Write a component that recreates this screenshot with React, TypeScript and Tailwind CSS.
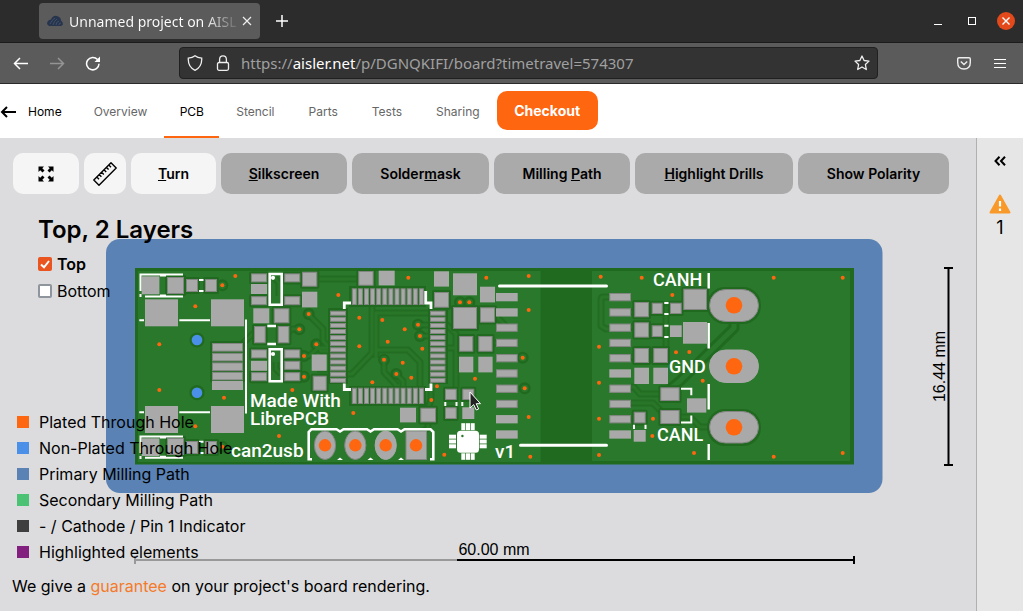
import type { ReactNode } from "react";

type Pad = [number, number, number, number];
type Point = [number, number];

const isolatedPads: Pad[] = [
  [167, 277, 17, 17], [186, 279, 12, 13], [205, 279, 12, 13],
  [167, 438, 17, 17], [186, 441, 12, 13], [205, 441, 12, 13],
  [212, 343, 31, 8.6], [212, 352.8, 31, 8.6], [212, 362.4, 31, 8.6], [212, 371.8, 31, 8.6],
  [251, 273.4, 16, 9], [251, 296.2, 16, 9], [284.3, 273.4, 16, 9], [284.3, 296.2, 16, 9],
  [302, 271.7, 15.3, 15], [273.7, 308.3, 15.7, 15], [254, 326, 11.7, 17.3], [277.7, 326, 11.7, 17.3],
  [251, 349.4, 16, 9], [251, 372.2, 16, 9], [284.3, 349.4, 16, 9], [284.3, 360.8, 16, 9], [284.3, 372.2, 16, 9],
  [312.7, 375.7, 14, 15], [358.3, 271, 15.3, 14.7], [434, 292, 15, 15.7], [453, 307, 24, 22],
  [480, 307.3, 15, 15.3], [459, 336, 14.3, 15.7], [478.3, 336, 14.3, 15.7],
  [420.3, 407.7, 15.7, 14.7], [445, 388.7, 11.7, 11.3], [462.3, 388.7, 12, 11.3], [445, 407.3, 11.7, 11.7],
  [634.3, 302, 14.7, 15.3], [651.7, 302.7, 11, 11.3], [670, 302.7, 11.7, 11.3], [683.3, 288.7, 23.7, 21.3],
  [634.3, 322.3, 14.7, 15.3], [651.7, 325.3, 11, 11.7], [634.3, 348, 14.7, 15], [653.3, 348, 14.7, 15],
  [660.3, 387.3, 19.3, 13.7], [660.3, 410, 19.3, 14], [633.7, 411.7, 12, 11.7],
];

const groundPads: Pad[] = [
  [141.7, 276.3, 17.7, 18], [141.7, 438.3, 17.7, 17.7], [145, 299.3, 33, 27], [211, 299.3, 33, 27],
  [145, 406, 33, 27], [211, 406, 33, 27], [212, 381, 31, 9], [251, 284, 16, 10], [302, 291.7, 15.3, 15.7],
  [253.3, 308.3, 16, 15], [251, 360.8, 16, 10], [311.7, 354.5, 15, 16.3], [378.7, 270.7, 16, 14.7],
  [434, 271.3, 15, 15.3], [453, 273.3, 24, 22], [480, 286.7, 15, 15.7], [459, 356.7, 14.3, 15.7],
  [478.3, 356.7, 14.3, 15.7], [400, 407.7, 16, 14.7], [462.3, 407.3, 12, 11.7], [670, 325.3, 11.7, 11.7],
  [683, 322, 24, 21.7], [634.3, 367.7, 14.7, 16.3], [653.3, 367.7, 14.7, 16.3], [687, 398.3, 19.3, 14.3],
  [633.7, 430, 12, 11.7],
];

const vias: Point[] = [
  [235.3, 276], [222.3, 285.3], [195.3, 306.3], [159.3, 344.3], [308.7, 314], [299.3, 329.3], [316.3, 344.3],
  [304, 356], [159.3, 390], [224, 397.7], [195.3, 426.3], [222.3, 446.7], [304, 376.7], [292.3, 390],
  [279, 436], [338.3, 295], [408.3, 277.7], [359.3, 317.7], [382.3, 320], [404.7, 329.3], [418, 324.7],
  [420, 336], [387.7, 341.7], [359.3, 346.3], [422.3, 348.7], [384, 359.7], [402.7, 362.7], [460, 302.3],
  [469.3, 302.3], [486.3, 277.7], [396.3, 374], [411.3, 377.7], [372.3, 382.3], [437, 386.3], [431.3, 400],
  [353.3, 413], [475, 378.7], [444.3, 454.7], [528.7, 276], [600.7, 276.7], [641.7, 277.7], [528.7, 310],
  [599, 346.7], [522.7, 357.7], [599, 382.7], [524.7, 388.3], [528.7, 417], [599, 418.7], [530.3, 456.7],
  [599, 455], [653, 418.7], [652.3, 436], [672.3, 295], [773.7, 277.7], [842.7, 277.7], [676, 352.3],
  [689.3, 352], [702.7, 380.7], [694, 453], [773.7, 456.7], [842.7, 453],
];

const ringedVias: Point[] = [
  [222.3, 285.3], [308.7, 314], [299.3, 329.3], [316.3, 344.3], [304, 356], [304, 376.7], [418, 324.7],
  [420, 336], [384, 359.7], [396.3, 374], [460, 302.3], [469.3, 302.3], [522.7, 357.7], [524.7, 388.3],
  [222.3, 446.7],
];

const traces = [
  "M317 279H358",
  "M308 314L323 329V341L330 348",
  "M316 344L321 351H331",
  "M304 356H309L318 348H330",
  "M299 329H292L284 337",
  "M243 343L256 331",
  "M317 374H352L372 353V285",
  "M376 358V313H430",
  "M418 325H430",
  "M420 336H430",
  "M376 350H408L420 362V386",
  "M384 360V372L397 386",
  "M396 374L403 381V388",
  "M445 323L456 334V388",
  "M445 348H459",
  "M431 388V400L428 408",
  "M428 422V428L416 436",
  "M495 315L507 327",
  "M492 343H507",
  "M609 297H603Q601 297 601 300V326L606 329H609",
  "M631 312H640",
  "M631 327H634",
  "M666 308V352",
  "M664 308H670",
  "M631 357H634",
  "M649 355H653",
  "M631 387H634L640 394H661",
  "M631 403H653L664 414",
  "M679 417H690L700 427H709",
  "M276 362V369L281 374",
  "M275 278L279 283V296",
];

const headerX = [325, 355.3, 385.7, 416];
const pinPitch = Array.from({ length: 12 }, (_, i) => i * 6.1);
const modulePitch = Array.from({ length: 10 }, (_, i) => i * 15.26);

function IsolatedPad({ pad: [x, y, w, h] }: { pad: Pad }) {
  return <rect x={x + 0.5} y={y + 0.5} width={w - 1} height={h - 1} fill="#a9a9a9" stroke="#838583" />;
}

function GroundPad({ pad: [x, y, w, h] }: { pad: Pad }) {
  return <rect x={x} y={y} width={w} height={h} fill="#a9a9a9" />;
}

function Board() {
  return (
    <svg viewBox="106 238 850 328" className="block h-auto w-[850px]" role="img" aria-label="Rendering of the top layer">
      <rect x="106" y="239" width="776.5" height="254" rx="14" fill="#5a82b4" />
      <rect x="135" y="268" width="719" height="196.5" fill="#206a20" />
      <path d="M138 271H540.5V462H138Z M592 271H850V461H592Z" fill="#2a782b" />

      <g fill="none" strokeLinejoin="round">
        {traces.map((d) => <path key={d} d={d} stroke="#226d22" strokeWidth="7" />)}
        {ringedVias.map(([x, y]) => <circle key={`${x}-${y}`} cx={x} cy={y} r="6" fill="#206a20" />)}
        <path d="M734 321V328L680 381L670 389" stroke="#206a20" strokeWidth="11" />
        {traces.map((d) => <path key={d} d={d} stroke="#297629" strokeWidth="3" />)}
        <path d="M734 321V328L680 381L670 389" stroke="#2a782b" strokeWidth="5" />
        {ringedVias.map(([x, y]) => <circle key={`${x}-${y}`} cx={x} cy={y} r="3.6" fill="#2a782b" />)}
      </g>

      <g fill="#206a20">
        {isolatedPads.map(([x, y, w, h]) => (
          <rect key={`${x}-${y}`} x={x - 2} y={y - 2} width={w + 4} height={h + 4} rx="2" />
        ))}
        <rect x="349" y="286" width="77" height="21" />
        <rect x="349" y="386" width="77" height="20" />
        <rect x="328" y="308" width="20" height="76" />
        <rect x="428" y="308" width="20" height="76" />
        <rect x="707" y="287" width="54" height="37" rx="18" />
        <rect x="707" y="409" width="54" height="37" rx="18" />
        <circle cx="197" cy="340" r="7.6" />
        <circle cx="197" cy="392.7" r="7.6" />
      </g>

      {isolatedPads.map((p) => <IsolatedPad key={p.join()} pad={p} />)}
      {groundPads.map((p) => <GroundPad key={p.join()} pad={p} />)}
      {pinPitch.map((o) => (
        <g key={o}>
          <IsolatedPad pad={[351.8 + o, 288.3, 5, 16.7]} />
          <IsolatedPad pad={[351.8 + o, 387.7, 5, 16.3]} />
          <IsolatedPad pad={[330, 310.7 + o, 16, 5]} />
          <IsolatedPad pad={[430, 310.7 + o, 15.5, 5]} />
        </g>
      ))}
      {modulePitch.map((o, i) => {
        const left: Pad = [496, 293 + o, 21.7, 8.3];
        const right: Pad = [609.3, 293 + o, 21.7, 8.3];
        return (
          <g key={o}>
            {i > 1 && i < 8 ? <IsolatedPad pad={left} /> : <GroundPad pad={left} />}
            {i !== 5 && i !== 9 ? <IsolatedPad pad={right} /> : <GroundPad pad={right} />}
          </g>
        );
      })}

      <g fill="#a9a9a9" stroke="#838583">
        {headerX.slice(0, 3).map((x, i) => (
          <ellipse key={x} cx={x} cy="445.3" rx="10.6" ry="14.2" stroke={i === 2 ? "#a9a9a9" : "#838583"} />
        ))}
        <rect x="406" y="431" width="20.5" height="28.5" />
        <rect x="709.5" y="289.5" width="49" height="32" rx="16" />
        <rect x="709.5" y="350" width="49" height="32.5" rx="16" stroke="#a9a9a9" />
        <rect x="709.5" y="411.5" width="49" height="31.5" rx="16" />
      </g>

      <g fill="#ff6610">
        {vias.map(([x, y]) => <circle key={`${x}-${y}`} cx={x} cy={y} r="2" />)}
        {headerX.map((x) => <circle key={x} cx={x} cy="445.3" r="6.2" />)}
        {[305.3, 366.3, 427.3].map((y) => <circle key={y} cx="734" cy={y} r="8.3" />)}
      </g>
      <circle cx="197" cy="340" r="5.3" fill="#4a90e8" />
      <circle cx="197" cy="392.7" r="5.3" fill="#4a90e8" />

      <g fill="none" stroke="#fff" strokeWidth="2">
        <path d="M183 274.5H140.5V291M140.5 294V297M145 296.5H183M160 275.5H166M160 295.5H166" />
        <path d="M183 436.5H140.5V453M140.5 456V459M145 457.8H183M160 437.5H166M160 456.8H166" />
        <path d="M199 280H203.5M199 291H203.5M199 441.7H203.5M199 453H203.5" />
        <path d="M139.3 320.2H144M179.3 320.2H210M139.3 412.3H144M179.3 412.3H210M246 319.5V413.5" />
        <path d="M269.7 274H281.7V304.7H269.7Z M269.7 349.3H281.7V381.3H269.7Z" strokeWidth="2.6" />
        <path d="M267.3 326H276M267.3 344H276" strokeWidth="2.6" />
        <path d="M344.3 309V303H351M425.7 291V303H431V309M344.3 383.5V389.5H351M425 389.5H431V383.5" strokeWidth="2.8" />
        <path d="M445.3 402V406M456.5 402V406M462.3 402V406M634 424.7V429M645.5 424.7V429" />
        <path d="M664.3 303H668.5M664.3 314H668.5M664.3 325.7H668.5M664.3 337H668.5" />
        <path d="M681 388.7H691.3V395.3M681 422.5H691.3V415.5" />
        <path d="M708.7 273V288.5M708.7 323V348.5M708.7 384V409.5M708.7 444V460" strokeWidth="2.4" />
        <path d="M499.5 286H606.5M520.5 445.3H606.5" strokeWidth="3" strokeLinecap="round" />
        <path
          d="M312 459.3H308.7V432L311.5 429.2H336.5L340 431.5L343.5 429.2H367L370.5 431.5L374 429.2H397.5L401 431.5L404.5 429.2H430.5L433.3 432V459.3H430"
          strokeWidth="2.6"
        />
      </g>
      <g fill="#fff">
        <circle cx="273" cy="277.8" r="2.1" />
        <circle cx="273" cy="354" r="2.1" />
        <path d="M337 460L340 457.5L343 460ZM367.5 460L370.5 457.5L373.5 460ZM398 460L401 457.5L404 460Z" />
        <rect x="457" y="430.7" width="22" height="22" rx="3.5" />
        {[434.7, 439.5, 444.3].map((y) => (
          <g key={y}>
            <rect x="449" y={y} width="7" height="4" />
            <rect x="479.7" y={y} width="7" height="4" />
          </g>
        ))}
        {[461.3, 466, 470.7].map((x) => (
          <g key={x}>
            <rect x={x} y="423.2" width="4" height="7" />
            <rect x={x} y="453.3" width="4" height="6.5" />
          </g>
        ))}
      </g>
      <circle cx="462.4" cy="436" r="1.2" fill="#2a782b" />

      <g fill="#fff" className="font-['Roboto',sans-serif] text-[19px] font-medium">
        <text x="250" y="407">Made With</text>
        <text x="250" y="425">LibrePCB</text>
        <text x="231" y="457">can2usb</text>
        <text x="495" y="458">v1</text>
      </g>
      <g fill="#fff" className="font-['Roboto',sans-serif] text-[18px] font-medium">
        <text x="653" y="286">CANH</text>
        <text x="669" y="373">GND</text>
        <text x="657" y="441">CANL</text>
      </g>

      <g fill="none" stroke="#000" strokeWidth="2">
        <path d="M948.5 268V465M944 268H953M944 465H953" />
        <path d="M457 560H854M854 556V564" />
        <path d="M457 560H135M135 556V564" stroke="#999" />
      </g>
      <g className="font-['Liberation_Sans',sans-serif] text-base" textAnchor="middle">
        <text x="494" y="555">60.00 mm</text>
        <text transform="translate(944.5 366.5) rotate(-90)">16.44 mm</text>
      </g>
      <path d="M470 392V408L473.7 404.6L476.3 410L478.6 409L476.2 403.7H480.5Z" fill="#222" stroke="#fff" strokeWidth="1" />
    </svg>
  );
}

function IconButton({ label, className = "", children }: { label: string; className?: string; children: ReactNode }) {
  return (
    <button type="button" aria-label={label} className={`flex items-center justify-center ${className}`}>
      {children}
    </button>
  );
}

function TitleBar() {
  return (
    <div className="flex h-[43px] items-center border-b border-[#1c1c1c] bg-[#2c2c2c] pl-[39px] pr-2 text-white">
      <div className="flex h-9 w-[221px] items-center rounded bg-[#5b5b5b] px-2">
        <svg viewBox="0 0 16 12" className="mr-1.5 h-3 w-4 shrink-0">
          <path d="M0 9Q0 5 4 4.5Q6 0 10 1Q14 2 14 5.5Q16 7 16 9.5L14 11H2Z" fill="#26344d" />
          <path d="M3 9Q5 5 8 3M6 10Q7 6 10 4M9 10Q9 7 12 6M12 10Q12 8 14 8" fill="none" stroke="#4e5b70" strokeWidth="0.7" />
        </svg>
        <span className="flex-1 whitespace-nowrap bg-linear-to-r from-white from-80% to-[#666] bg-clip-text text-[14px] text-transparent">
          Unnamed project on AISL
        </span>
        <IconButton label="Close tab" className="ml-1 shrink-0">
          <svg viewBox="0 0 10 10" className="size-2.5"><path d="M1 1L9 9M9 1L1 9" stroke="#eee" strokeWidth="1.2" /></svg>
        </IconButton>
      </div>
      <IconButton label="New tab" className="ml-4">
        <svg viewBox="0 0 12 12" className="size-3"><path d="M6 0V12M0 6H12" stroke="#fff" strokeWidth="1.5" /></svg>
      </IconButton>
      <div className="ml-auto flex items-center">
        <IconButton label="Minimize" className="mr-[26px]">
          <svg viewBox="0 0 8 8" className="size-2"><path d="M0 7.5H8" stroke="#fff" /></svg>
        </IconButton>
        <IconButton label="Maximize" className="mr-[21px]">
          <svg viewBox="0 0 8 8" className="size-2"><rect x="0.5" y="0.5" width="7" height="7" fill="none" stroke="#fff" /></svg>
        </IconButton>
        <IconButton label="Close window" className="size-[18px] rounded-full bg-[#e24a1b]">
          <svg viewBox="0 0 8 8" className="size-2"><path d="M0.5 0.5L7.5 7.5M7.5 0.5L0.5 7.5" stroke="#fff" strokeWidth="1.4" /></svg>
        </IconButton>
      </div>
    </div>
  );
}

function AddressBar() {
  return (
    <div className="flex h-[41px] items-center border-b border-[#2a2a2a] bg-[#5b5b5b] pl-[13px] pr-[17px]">
      <IconButton label="Back">
        <svg viewBox="0 0 16 16" className="size-4"><path d="M15 8.5H1.5M7 3L1.5 8.5L7 14" fill="none" stroke="#fff" strokeWidth="1.5" /></svg>
      </IconButton>
      <IconButton label="Forward" className="ml-5">
        <svg viewBox="0 0 16 16" className="size-4"><path d="M1 8.5H14.5M9 3L14.5 8.5L9 14" fill="none" stroke="#949494" strokeWidth="1.5" /></svg>
      </IconButton>
      <IconButton label="Reload" className="ml-5">
        <svg viewBox="0 0 16 16" className="size-4">
          <path d="M14 8.7A6.2 6.2 0 1 1 12.5 4.6" fill="none" stroke="#fff" strokeWidth="1.5" />
          <path d="M15 1.5V7H9.5Z" fill="#fff" />
        </svg>
      </IconButton>
      <div className="ml-[78px] flex h-8 w-[699px] items-center rounded border border-[#202020] bg-[#333] px-[7px]">
        <svg viewBox="0 0 16 16" className="size-4 shrink-0">
          <path d="M8 0.8Q10.5 2.8 14.7 3.2Q15.2 12 8 15.3Q0.8 12 1.3 3.2Q5.5 2.8 8 0.8Z" fill="none" stroke="#eee" strokeWidth="1.3" />
        </svg>
        <svg viewBox="0 0 14 16" className="ml-[13px] h-4 w-3.5 shrink-0">
          <rect x="1.5" y="7.5" width="11" height="7.8" rx="1.5" fill="none" stroke="#eee" strokeWidth="1.3" />
          <path d="M3.6 7.5V4.5Q3.6 0.8 7 0.8T10.4 4.5V7.5" fill="none" stroke="#eee" strokeWidth="1.3" />
        </svg>
        <div className="ml-[11px] flex-1 whitespace-nowrap text-[15px] text-[#a0a0a0]">
          https://<span className="text-white">aisler.net</span>/p/DGNQKIFI/board?timetravel=574307
        </div>
        <IconButton label="Bookmark">
          <svg viewBox="0 0 16 16" className="size-4">
            <path d="M8 1L10.1 5.5L15 6.1L11.4 9.5L12.3 14.5L8 12L3.7 14.5L4.6 9.5L1 6.1L5.9 5.5Z" fill="none" stroke="#eee" strokeWidth="1.3" strokeLinejoin="round" />
          </svg>
        </IconButton>
      </div>
      <IconButton label="Pocket" className="ml-auto">
        <svg viewBox="0 0 14 13" className="h-[13px] w-3.5">
          <path d="M2 0.7H12Q13.3 0.7 13.3 2V5.500Q13.3 12 7 12T0.700 5.500V2Q0.700 0.700 2 0.700Z" fill="none" stroke="#eee" strokeWidth="1.400" />
          <path d="M3.800 4.500L7 7.500L10.200 4.500" fill="none" stroke="#eee" strokeWidth="1.400" />
        </svg>
      </IconButton>
      <IconButton label="Menu" className="ml-[23px]">
        <svg viewBox="0 0 12 11" className="h-[11px] w-3"><path d="M0 1.500H12M0 5.500H12M0 9.500H12" stroke="#fff" /></svg>
      </IconButton>
    </div>
  );
}

function SiteNav() {
  const tab = "flex items-center border-b-2 border-transparent px-[17px] pt-1";
  return (
    <nav className="flex h-[54px] items-stretch bg-white text-[12px] text-[#666]">
      <a href="#home" className="flex items-center border-b-2 border-transparent pt-1 text-black">
        <svg viewBox="0 0 16 12" className="mr-3 h-3 w-4"><path d="M16 6H2M7 1L2 6L7 11" fill="none" stroke="#000" strokeWidth="2" /></svg>
        Home
      </a>
      <a href="#overview" className={`${tab} ml-[15px]`}>Overview</a>
      <a href="#pcb" aria-current="page" className="flex w-[55px] items-center justify-center border-b-2 border-[#ff6610] pt-1 text-black">PCB</a>
      <a href="#stencil" className={tab}>Stencil</a>
      <a href="#parts" className={tab}>Parts</a>
      <a href="#tests" className={tab}>Tests</a>
      <a href="#sharing" className={tab}>Sharing</a>
      <button type="button" className="mt-[7px] h-[39px] w-[101px] rounded-[10px] bg-[#ff6610] text-[14px] font-bold text-white">Checkout</button>
    </nav>
  );
}

function ViewerToolbar() {
  const base = "h-[41px] rounded-[10px] text-[14px] font-semibold";
  const light = `${base} bg-[#f5f5f5]`;
  const dark = `${base} bg-[#aaa]`;
  return (
    <div className="flex gap-[5px] pl-[13px] pt-[15px]">
      <IconButton label="Fit to view" className={`${light} w-[66px]`}>
        <svg viewBox="0 0 16 16" className="size-4">
          <path d="M0.5 0.5H6L4.3 2.2L6.5 4.5L4.5 6.5L2.2 4.3L0.5 6ZM15.5 0.5V6L13.8 4.3L11.5 6.5L9.5 4.5L11.7 2.2L10 0.5ZM0.5 15.5V10L2.2 11.7L4.5 9.5L6.5 11.5L4.3 13.8L6 15.5ZM15.5 15.5H10L11.7 13.8L9.5 11.5L11.5 9.5L13.8 11.7L15.5 10Z" />
        </svg>
      </IconButton>
      <IconButton label="Measure" className={`${light} w-[42px]`}>
        <svg viewBox="0 0 24 24" className="size-6">
          <path d="M18 0.8L23.2 6L6 23.2L0.8 18ZM3.8 15L6 17.2M6.2 12.6L8.4 14.8M8.6 10.2L10.8 12.4M11 7.8L13.2 10M13.4 5.4L15.6 7.6M15.8 3L18 5.2" fill="none" stroke="#000" strokeWidth="1.4" strokeLinejoin="round" />
        </svg>
      </IconButton>
      <button type="button" className={`${light} w-[85px]`}><u>T</u>urn</button>
      <button type="button" className={`${dark} w-[126px]`}><u>S</u>ilkscreen</button>
      <button type="button" className={`${dark} w-[137px]`}>Solder<u>m</u>ask</button>
      <button type="button" className={`${dark} w-[136px]`}>Milling <u>P</u>ath</button>
      <button type="button" className={`${dark} w-[158px]`}><u>H</u>ighlight Drills</button>
      <button type="button" className={`${dark} w-[151px]`}>Show Polarity</button>
    </div>
  );
}

function LayerOption({ label, checked = false }: { label: string; checked?: boolean }) {
  return (
    <label className={`flex h-[27px] items-center gap-[5px] text-base ${checked ? "font-semibold" : ""}`}>
      <span className="grid size-3.5">
        <input
          type="checkbox"
          defaultChecked={checked}
          className="peer col-start-1 row-start-1 size-3.5 appearance-none rounded-[2px] border-2 border-[#8f959c] bg-white checked:border-[#e9541f] checked:bg-[#e9541f]"
        />
        <svg viewBox="0 0 14 14" className="pointer-events-none col-start-1 row-start-1 hidden size-3.5 peer-checked:block">
          <path d="M3 7.5L6 10.3L11 4" fill="none" stroke="#fff" strokeWidth="2" />
        </svg>
      </span>
      {label}
    </label>
  );
}

const legend = [
  { label: "Plated Through Hole", color: "bg-[#ff6610]" },
  { label: "Non-Plated Through Hole", color: "bg-[#4a90e8]" },
  { label: "Primary Milling Path", color: "bg-[#5a82b4]" },
  { label: "Secondary Milling Path", color: "bg-[#4cc274]" },
  { label: "- / Cathode / Pin 1 Indicator", color: "bg-[#3f3f40]" },
  { label: "Highlighted elements", color: "bg-[#83207f]" },
];

function Viewer() {
  return (
    <section className="grid">
      <div className="col-start-1 row-start-1 pl-[106px] pt-11">
        <Board />
      </div>
      <div className="z-10 col-start-1 row-start-1 flex flex-col justify-between pt-[22px]">
        <div className="pl-[38px]">
          <h1 className="text-2xl font-semibold leading-7">Top, 2 Layers</h1>
          <div className="pt-1.5">
            <LayerOption label="Top" checked />
            <LayerOption label="Bottom" />
          </div>
        </div>
        <ul className="pb-px pl-[17px] text-base">
          {legend.map(({ label, color }) => (
            <li key={label} className="flex h-[26px] items-center gap-2.5">
              <span className={`size-3 ${color}`} />
              {label}
            </li>
          ))}
        </ul>
      </div>
    </section>
  );
}

function Sidebar() {
  return (
    <aside className="flex w-[47px] shrink-0 flex-col items-center border-l border-[#b0b0b0] bg-[#e6e6e6] pt-[18px]">
      <IconButton label="Expand panel">
        <svg viewBox="0 0 12 10" className="h-2.5 w-3"><path d="M5.5 0.7L1.5 5L5.5 9.3M11 0.7L7 5L11 9.3" fill="none" stroke="#000" strokeWidth="2" /></svg>
      </IconButton>
      <svg viewBox="0 0 22 20" className="mt-7 h-5 w-[22px]" role="img" aria-label="Warning">
        <path d="M11 1.5L20.5 18.5H1.5Z" fill="#f8992a" stroke="#f8992a" strokeWidth="2" strokeLinejoin="round" />
        <path d="M11 7V12.5M11 14.5V17" stroke="#fff" strokeWidth="2.2" />
      </svg>
      <span className="text-lg">1</span>
    </aside>
  );
}

export default function App() {
  return (
    <div className="flex min-h-screen flex-col bg-[#dcdcde] font-['Inter',sans-serif] text-black">
      <header className="font-['Noto_Sans',sans-serif]">
        <TitleBar />
        <AddressBar />
      </header>
      <SiteNav />
      <div className="flex flex-1">
        <main className="min-w-0 flex-1">
          <ViewerToolbar />
          <Viewer />
          <p className="pl-3 pt-2 text-base">
            We give a <a href="#guarantee" className="text-[#f47a2a]">guarantee</a> on your project's board rendering.
          </p>
        </main>
        <Sidebar />
      </div>
    </div>
  );
}
